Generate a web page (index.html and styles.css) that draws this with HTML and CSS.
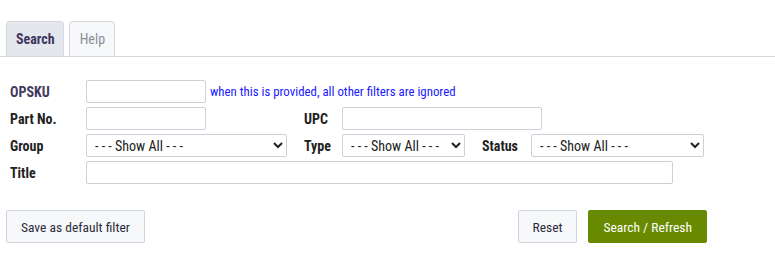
FILE: index.html
```html
<!DOCTYPE html>
<html>
<head>
<meta charset="utf-8">
<link rel="stylesheet" href="styles.css">
</head>
<body>
<div class="tabs">
  <div class="tab active">Search</div>
  <div class="tab">Help</div>
</div>
<form class="filters">
  <label class="lbl lbl-key">OPSKU</label>
  <div class="span5 inline"><input class="txt w120" type="text"><span class="note">when this is provided, all other filters are ignored</span></div>

  <label class="lbl">Part No.</label>
  <div><input class="txt w120" type="text"></div>
  <label class="lbl">UPC</label>
  <div class="span3"><input class="txt w200" type="text"></div>

  <label class="lbl">Group</label>
  <div><select class="sel w201"><option>- - - Show All - - -</option></select></div>
  <label class="lbl">Type</label>
  <div><select class="sel w123"><option>- - - Show All - - -</option></select></div>
  <label class="lbl">Status</label>
  <div><select class="sel w173"><option>- - - Show All - - -</option></select></div>

  <label class="lbl">Title</label>
  <div class="span5"><input class="txt w587" type="text"></div>
</form>
<div class="actions">
  <button class="btn" type="button">Save as default filter</button>
  <div class="right">
    <button class="btn" type="button">Reset</button>
    <button class="btn primary" type="button">Search / Refresh</button>
  </div>
</div>
</body>
</html>
```
FILE: styles.css
```css
html, body {
  margin: 0;
  background: #fff;
}
body {
  font-family: "Roboto", "Liberation Sans", sans-serif;
  font-stretch: 75%;
  font-size: 13px;
  color: #222;
  padding-top: 21px;
}
.tabs {
  display: flex;
  gap: 5px;
  padding-left: 6px;
  border-bottom: 1px solid #d6d9e0;
  height: 35px;
}
.tab {
  height: 35px;
  box-sizing: border-box;
  border: 1px solid #d6d9e0;
  border-bottom: none;
  border-radius: 4px 4px 0 0;
  background: #f6f8fa;
  color: #8a8e98;
  font-size: 14px;
  padding: 0 9px 0 10px;
  display: flex;
  align-items: center;
}
.tab.active {
  background: #e4e7ec;
  color: #3e3660;
  font-weight: bold;
  padding: 0 8px 0 9px;
}
.filters {
  margin: 23px 0 0 10px;
  display: grid;
  grid-template-columns: 76px 218px 38px 140px 49px 172px;
  grid-auto-rows: 23px;
  row-gap: 4px;
  align-items: center;
}
.lbl {
  font-weight: bold;
  font-size: 14px;
  color: #222;
}
.lbl-key {
  color: #43395f;
}
.span5 { grid-column: span 5; }
.span3 { grid-column: span 3; }
.inline {
  display: flex;
  align-items: center;
  gap: 4px;
}
.note {
  color: #1a1aff;
  font-size: 12.85px;
}
.txt, .sel {
  box-sizing: border-box;
  height: 23px;
  border: 1px solid #ccd0d8;
  border-radius: 2px;
  background: #fff;
  font: inherit;
  font-size: 14px;
  color: #222;
  display: block;
  margin: 0;
}
.sel {
  padding: 0 4px;
}
.w120 { width: 120px; }
.w200 { width: 200px; }
.w201 { width: 201px; }
.w123 { width: 123px; }
.w173 { width: 173px; }
.w587 { width: 587px; }
.actions {
  display: flex;
  justify-content: space-between;
  width: 701px;
  margin: 26px 0 0 6px;
}
.right {
  display: flex;
  gap: 11px;
}
.btn {
  height: 33px;
  box-sizing: border-box;
  border: 1px solid #d0d4dc;
  border-radius: 2px;
  background: #f6f8fa;
  color: #2c2c3a;
  font: inherit;
  font-size: 13.5px;
  padding: 0 14px;
}
.btn.primary {
  background: #678a00;
  border-color: #678a00;
  color: #fff;
}
```
